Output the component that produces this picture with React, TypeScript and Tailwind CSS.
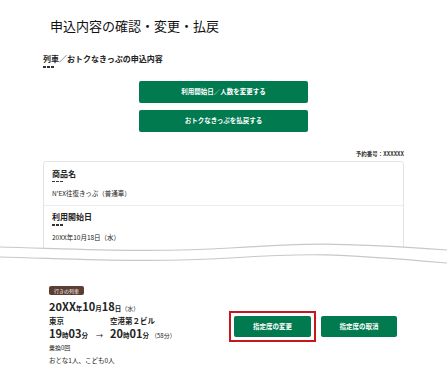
import React from 'react';

const font = { fontFamily: '"Noto Sans CJK JP", "Noto Sans", sans-serif' };

function Dashes() {
  return (
    <div className="flex gap-[1px] mt-[2px]">
      <span className="block w-[3px] h-[1.5px] bg-[#333]" />
      <span className="block w-[3px] h-[1.5px] bg-[#333]" />
      <span className="block w-[3px] h-[1.5px] bg-[#333]" />
    </div>
  );
}

function GreenButton({ children, className = '' }: { children: React.ReactNode; className?: string }) {
  return (
    <button
      type="button"
      className={`bg-[#007a4e] text-white font-bold rounded-[2px] flex items-center justify-center text-[6.5px] leading-[9px] ${className}`}
    >
      {children}
    </button>
  );
}

export default function App() {
  return (
    <div className="relative w-[447px] h-[374px] bg-white overflow-hidden text-[#222] text-[8px] leading-[10px]" style={font}>
      <h1 className="pl-[50px] pt-[17px] text-[13px] leading-[18px] font-normal text-[#111]">
        申込内容の確認・変更・払戻
      </h1>

      <div className="pl-[43px] mt-[19px]">
        <h2 className="text-[8px] leading-[10px] font-bold">列車／おトクなきっぷの申込内容</h2>
        <Dashes />
      </div>

      <div className="flex flex-col items-center gap-[7px] mt-[13px]">
        <GreenButton className="w-[169px] h-[22px]">利用開始日／人数を変更する</GreenButton>
        <GreenButton className="w-[169px] h-[22px]">おトクなきっぷを払戻する</GreenButton>
      </div>

      <div className="w-[361px] ml-[43px] mt-[18px]">
        <p className="text-right text-[5.5px] leading-[8px] font-bold text-[#333]">予約番号：XXXXXX</p>
        <div className="mt-[3px] h-[95px] border border-[#e4e4e4] rounded-[3px] bg-white">
          <div className="px-[8px] pt-[7px] pb-[7px] border-b border-[#ececec]">
            <p className="text-[8px] leading-[10px] font-bold">商品名</p>
            <Dashes />
            <p className="mt-[7px] text-[6.5px] leading-[9px]">N'EX往復きっぷ（普通車）</p>
          </div>
          <div className="px-[8px] pt-[6px]">
            <p className="text-[8px] leading-[10px] font-bold">利用開始日</p>
            <Dashes />
            <p className="mt-[7px] text-[6.5px] leading-[9px]">20XX年10月18日（水）</p>
          </div>
        </div>
      </div>

      <svg className="absolute left-0 top-[235px]" width="447" height="40" viewBox="0 0 447 40">
        <path d="M0 12 C 80 14, 150 18, 230 13 S 330 7, 447 15 L 447 40 L 0 40 Z" fill="#fff" />
        <path d="M0 12 C 80 14, 150 18, 230 13 S 330 7, 447 15" fill="none" stroke="#c8c8c8" strokeWidth="1.2" />
        <path d="M0 22 C 80 24, 150 28, 230 23 S 330 18, 447 28" fill="none" stroke="#c8c8c8" strokeWidth="1.2" />
      </svg>

      <div className="absolute left-0 right-0 top-[286px] pl-[49px] flex items-start text-[6px] leading-[9px]">
        <div className="w-[180px]">
          <div className="flex">
            <span className="bg-[#5b3d33] text-white text-[5px] leading-[9px] px-[5px] rounded-[2px]">
              行きの列車
            </span>
          </div>
          <p className="mt-[5px] font-bold text-[11px] leading-[13px]">
            20XX<span className="text-[6.5px]">年</span>10<span className="text-[6.5px]">月</span>18
            <span className="text-[6.5px]">日</span>
            <span className="text-[6px] font-normal">（水）</span>
          </p>
          <div className="mt-[1px] flex text-[7.5px] font-bold leading-[9px]">
            <span className="w-[61px]">東京</span>
            <span>空港第２ビル</span>
          </div>
          <div className="mt-[2px] flex items-baseline font-bold text-[11px] leading-[12px]">
            <span className="w-[47px]">
              19<span className="text-[6.5px]">時</span>03<span className="text-[6.5px]">分</span>
            </span>
            <span className="w-[14px] text-[7px] font-normal">→</span>
            <span>
              20<span className="text-[6.5px]">時</span>01<span className="text-[6.5px]">分</span>
              <span className="text-[6px] font-normal ml-[2px]">（58分）</span>
            </span>
          </div>
          <p className="mt-[2px] text-[6px] leading-[8px]">乗換0回</p>
          <p className="mt-[4px] text-[6.5px] leading-[8px]">おとな1人、こども0人</p>
        </div>
        <div className="mt-[25px] flex items-center gap-[5px]">
          <div className="border-2 border-[#c8161d] p-[3px]">
            <GreenButton className="w-[77px] h-[21px]">指定席の変更</GreenButton>
          </div>
          <GreenButton className="w-[76px] h-[21px]">指定席の取消</GreenButton>
        </div>
      </div>
    </div>
  );
}
